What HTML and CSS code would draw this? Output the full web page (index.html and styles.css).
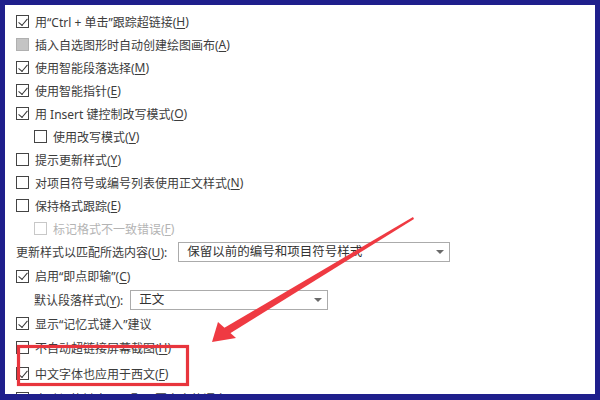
FILE: index.html
```html
<!DOCTYPE html>
<html lang="zh-CN">
<head>
    <meta charset="UTF-8">
    <title>高级选项</title>
    <link rel="stylesheet" href="styles.css">
</head>
<body>
    <div class="frame">
        <div class="options">
            <label class="row"><span class="box checked"></span>用“Ctrl + 单击”跟踪超链接(<u>H</u>)</label>
            <label class="row"><span class="box mixed"></span>插入自选图形时自动创建绘图画布(<u>A</u>)</label>
            <label class="row"><span class="box checked"></span>使用智能段落选择(<u>M</u>)</label>
            <label class="row"><span class="box checked"></span>使用智能指针(<u>E</u>)</label>
            <label class="row"><span class="box checked"></span>用 Insert 键控制改写模式(<u>O</u>)</label>
            <label class="row sub"><span class="box"></span>使用改写模式(<u>V</u>)</label>
            <label class="row"><span class="box"></span>提示更新样式(<u>Y</u>)</label>
            <label class="row"><span class="box"></span>对项目符号或编号列表使用正文样式(<u>N</u>)</label>
            <label class="row"><span class="box"></span>保持格式跟踪(<u>E</u>)</label>
            <label class="row sub disabled"><span class="box"></span>标记格式不一致错误(<u>F</u>)</label>
            <div class="row tall">
                <span class="field-label">更新样式以匹配所选内容(<u>U</u>):</span>
                <div class="select wide">保留以前的编号和项目符号样式<span class="caret"></span></div>
            </div>
            <label class="row tall"><span class="box checked"></span>启用“即点即输”(<u>C</u>)</label>
            <div class="row tall sub">
                <span class="field-label">默认段落样式(<u>Y</u>):</span>
                <div class="select narrow">正文<span class="caret"></span></div>
            </div>
            <label class="row"><span class="box checked"></span>显示“记忆式键入”建议</label>
            <label class="row taller"><span class="box"></span>不自动超链接屏幕截图(<u>H</u>)</label>
            <label class="row tallest"><span class="box checked"></span>中文字体也应用于西文(<u>F</u>)</label>
            <label class="row"><span class="box"></span>自动切换键盘以匹配周围文字的语言(<u>B</u>)</label>
        </div>

        <!-- 标注：红框和箭头 -->
        <svg class="marks" width="600" height="400" viewBox="0 0 600 400">
            <rect x="18.5" y="346.5" width="169" height="38" fill="none" stroke="#e8353d" stroke-width="3.2"/>
            <polygon points="413,217 414,219 229,334 224,328" fill="#ef3a42"/>
            <polygon points="212,342 218,322 236,338" fill="#ef3a42"/>
        </svg>
    </div>
</body>
</html>
```

FILE: styles.css
```css
* {
    margin: 0;
    padding: 0;
    box-sizing: border-box;
}

body {
    width: 600px;
    height: 400px;
    overflow: hidden;
    background: #1f1f8c;
    font-family: 'Noto Sans', 'Noto Sans CJK SC', sans-serif;
    font-size: 12px;
    color: #3c3c3c;
}

.frame {
    position: relative;
    width: 600px;
    height: 400px;
    border: 5px solid #1f1f8c;
    border-bottom-width: 6px;
    background: #fff;
    overflow: hidden;
}

.options {
    display: flex;
    flex-direction: column;
    padding: 5px 0 0 11px;
}

.row {
    display: flex;
    align-items: center;
    height: 23px;
    white-space: nowrap;
}

.row.tall {
    height: 24px;
}

.row.taller {
    height: 25px;
}

.row.tallest {
    height: 27px;
}

.row.sub {
    padding-left: 18px;
}

.row u {
    text-decoration: underline;
    text-underline-offset: 2px;
}

.disabled {
    color: #b4b4b4;
}

.box {
    width: 13px;
    height: 13px;
    border: 1px solid #444;
    background: #fff;
    margin-right: 6px;
    flex-shrink: 0;
    position: relative;
}

.box.checked::after {
    content: "";
    position: absolute;
    left: 3.5px;
    top: 0.5px;
    width: 4px;
    height: 8px;
    border-right: 1.4px solid #333;
    border-bottom: 1.4px solid #333;
    transform: rotate(40deg);
    transform-origin: 60% 40%;
}

.box.mixed {
    background: #c4c4c4;
    border-color: #b0b0b0;
}

.disabled .box {
    border-color: #c8c8c8;
}

.field-label {
    margin-right: 11px;
}

.select {
    position: relative;
    height: 20px;
    border: 1px solid #ababab;
    background: #fff;
    padding-left: 8px;
    line-height: 18px;
    color: #333;
    font-size: 12.5px;
}

.select.wide {
    width: 272px;
}

.select.narrow {
    width: 198px;
    margin-left: -4px;
}

.caret {
    position: absolute;
    right: 5px;
    top: 7px;
    border-left: 4px solid transparent;
    border-right: 4px solid transparent;
    border-top: 4px solid #6a6a6a;
}

.marks {
    position: absolute;
    left: -5px;
    top: -5px;
    pointer-events: none;
}
```
